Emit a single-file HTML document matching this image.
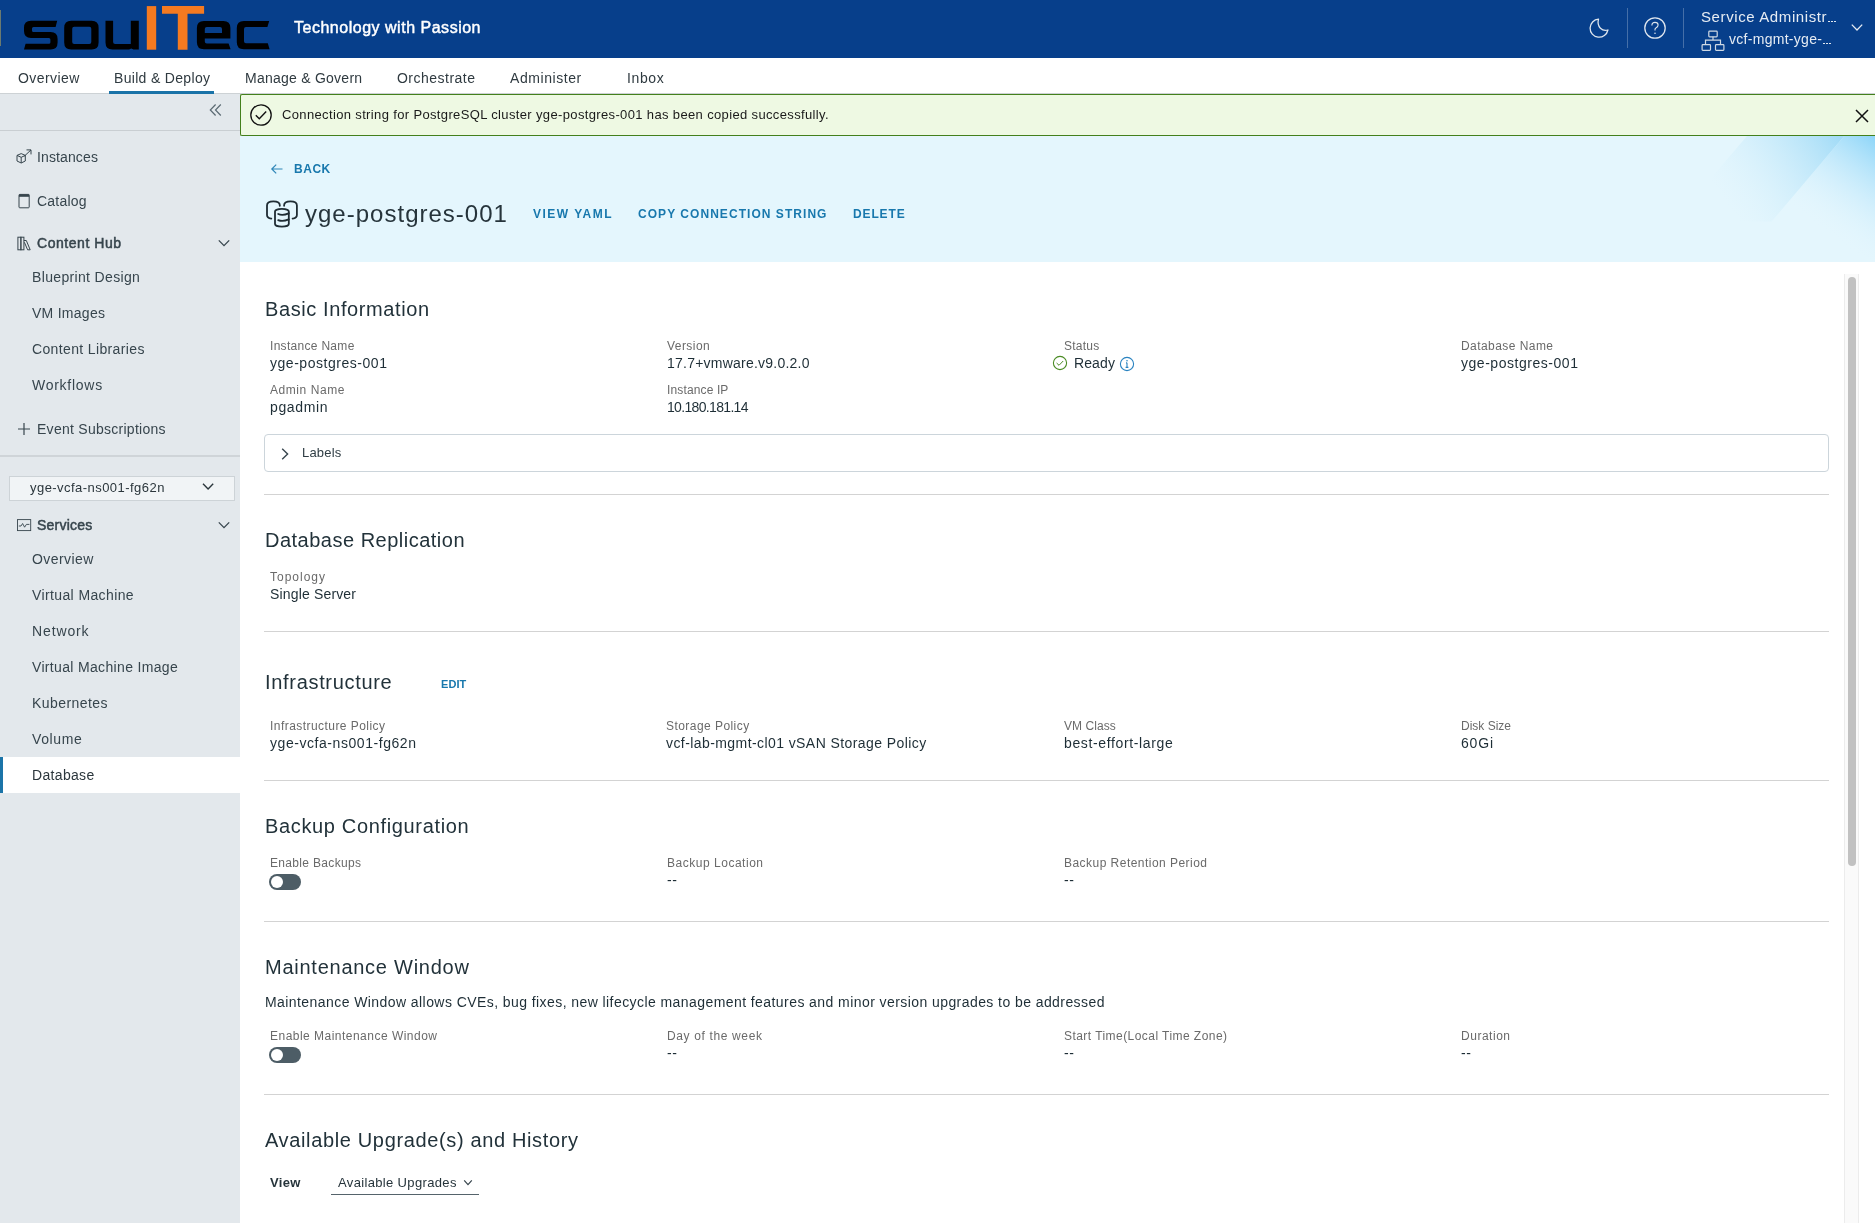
<!DOCTYPE html>
<html><head><meta charset="utf-8"><title>yge-postgres-001</title>
<style>
html,body{margin:0;padding:0;width:1875px;height:1223px;overflow:hidden;background:#fff;font-family:"Liberation Sans",sans-serif;}
.t{position:absolute;white-space:nowrap;line-height:1;will-change:transform;font-family:"Liberation Sans",sans-serif;}
</style></head><body>
<div style="position:absolute;left:0;top:0;width:1875px;height:58px;background:#073f8b"></div>
<div style="position:absolute;left:0;top:10px;width:1px;height:36px;background:#6b7a70"></div>
<svg style="position:absolute;left:0;top:0" width="280" height="58" viewBox="0 0 280 58">
<g fill="#000">
<path d="M31 20.8 H57.2 L55.6 27 H33.5 Q32 27 32 28.5 V30.4 Q32 31.9 33.5 31.9 H50.6 Q57.6 31.9 57.6 38.9 V42.6 Q57.6 49.6 50.6 49.6 H24 L25.6 43.7 H48.9 Q50.4 43.7 50.4 42.2 V39.6 Q50.4 38.1 48.9 38.1 H31 Q24 38.1 24 31.1 V27.8 Q24 20.8 31 20.8 Z"/>
<path fill-rule="evenodd" d="M71.2 20.8 H91.6 Q98.6 20.8 98.6 27.8 V42.6 Q98.6 49.6 91.6 49.6 H71.2 Q64.2 49.6 64.2 42.6 V27.8 Q64.2 20.8 71.2 20.8 Z M74.2 26.7 Q72.2 26.7 72.2 28.7 V42 Q72.2 44 74.2 44 H89.3 Q91.3 44 91.3 42 V28.7 Q91.3 26.7 89.3 26.7 Z"/>
<path d="M105.5 20.8 H113.1 V42 Q113.1 44 115.1 44 H130.8 V20.8 H138.8 V49.6 H133.5 L131.2 48.4 Q129.5 49.6 126 49.6 H112.5 Q105.5 49.6 105.5 42.6 Z"/>
<path fill-rule="evenodd" d="M203.9 20.9 H223.4 Q230.4 20.9 230.4 27.9 V38.5 H204.8 V41.6 Q204.8 43.6 206.8 43.6 H228.6 L230.6 49.3 H203.9 Q196.9 49.3 196.9 42.3 V27.9 Q196.9 20.9 203.9 20.9 Z M206.8 27 Q204.8 27 204.8 29 V33.1 H222 V29 Q222 27 220 27 Z"/>
<path d="M243.8 20.9 H269.2 L267.4 27 H246 Q244 27 244 29 V41.2 Q244 43.2 246 43.2 H267.8 L269.6 49.3 H243.8 Q236.8 49.3 236.8 42.3 V27.9 Q236.8 20.9 243.8 20.9 Z"/>
</g>
<g fill="#f47a20">
<rect x="146.8" y="6.1" width="9.4" height="43.6"/>
<path d="M162 6.1 H204.1 V13.7 H187.5 V49.7 H177.8 V13.7 H162 Z"/>
</g></svg>
<div class="t" style="left:294.10px;top:20px;font-size:16px;color:#ffffff;font-weight:400;letter-spacing:0.514px;-webkit-text-stroke:0.45px #ffffff;">Technology with Passion</div>
<div style="position:absolute;left:1627px;top:8px;width:1px;height:40px;background:rgba(255,255,255,0.25)"></div>
<div style="position:absolute;left:1683px;top:8px;width:1px;height:40px;background:rgba(255,255,255,0.25)"></div>
<svg style="position:absolute;left:1586px;top:16px" width="26" height="24" viewBox="0 0 26 24"><path d="M12.5 3.2 A9 9 0 1 0 21.9 14 C16.5 15.8 10.5 11 12.5 3.2 Z" fill="none" stroke="#dfe6ee" stroke-width="1.3" stroke-linejoin="round"/></svg>
<svg style="position:absolute;left:1643px;top:16px" width="24" height="24" viewBox="0 0 24 24"><circle cx="12" cy="12" r="10.2" fill="none" stroke="#dfe6ee" stroke-width="1.3"/><path d="M8.9 9.4 Q8.9 6.4 12 6.4 Q15.1 6.4 15.1 9.1 Q15.1 11 12.9 12 Q12 12.4 12 13.6 V14.6" fill="none" stroke="#dfe6ee" stroke-width="1.1"/><circle cx="12" cy="17.3" r="0.8" fill="#dfe6ee"/></svg>
<div class="t" style="left:1701.20px;top:9px;font-size:15px;color:#e6ecf3;font-weight:400;letter-spacing:0.608px;">Service Administr</div>
<div style="position:absolute;left:1828.0px;top:20.7px;width:1.5px;height:1.5px;background:#dfe7f0"></div>
<div style="position:absolute;left:1831.0px;top:20.7px;width:1.5px;height:1.5px;background:#dfe7f0"></div>
<div style="position:absolute;left:1834.0px;top:20.7px;width:1.5px;height:1.5px;background:#dfe7f0"></div>
<svg style="position:absolute;left:1701px;top:30px" width="24" height="22" viewBox="0 0 24 22"><g fill="none" stroke="#cfd9e4" stroke-width="1.2"><rect x="7.8" y="1.2" width="8.4" height="5.6" rx="0.8"/><path d="M12 6.8 V10.2 M4.5 14.6 V10.2 H19.5 V14.6"/><rect x="1.1" y="14.6" width="8.4" height="5.8" rx="0.8"/><rect x="14.5" y="14.6" width="8.4" height="5.8" rx="0.8"/></g></svg>
<div class="t" style="left:1729.00px;top:32px;font-size:14px;color:#e6ecf3;font-weight:400;letter-spacing:0.287px;">vcf-mgmt-yge-</div>
<div style="position:absolute;left:1823.0px;top:42.6px;width:1.5px;height:1.5px;background:#dfe7f0"></div>
<div style="position:absolute;left:1826.0px;top:42.6px;width:1.5px;height:1.5px;background:#dfe7f0"></div>
<div style="position:absolute;left:1829.0px;top:42.6px;width:1.5px;height:1.5px;background:#dfe7f0"></div>
<svg style="position:absolute;left:1850px;top:22px" width="14" height="11" viewBox="0 0 14 11"><path d="M1.8 2.6 L7 8 L12.2 2.6" fill="none" stroke="#e6ecf3" stroke-width="1.3"/></svg>
<div style="position:absolute;left:0;top:58px;width:1875px;height:35px;background:#fff"></div>
<div style="position:absolute;left:0;top:93px;width:1875px;height:1px;background:#cdd2d5"></div>
<div class="t" style="left:17.60px;top:71px;font-size:14px;color:#2f3a40;font-weight:400;letter-spacing:0.417px;">Overview</div>
<div class="t" style="left:113.60px;top:71px;font-size:14px;color:#2f3a40;font-weight:400;letter-spacing:0.320px;">Build &amp; Deploy</div>
<div class="t" style="left:244.90px;top:71px;font-size:14px;color:#2f3a40;font-weight:400;letter-spacing:0.249px;">Manage &amp; Govern</div>
<div class="t" style="left:396.80px;top:71px;font-size:14px;color:#2f3a40;font-weight:400;letter-spacing:0.485px;">Orchestrate</div>
<div class="t" style="left:509.60px;top:71px;font-size:14px;color:#2f3a40;font-weight:400;letter-spacing:0.572px;">Administer</div>
<div class="t" style="left:627.20px;top:71px;font-size:14px;color:#2f3a40;font-weight:400;letter-spacing:0.618px;">Inbox</div>
<div style="position:absolute;left:109px;top:91px;width:105px;height:3px;background:#1a73a8"></div>
<div style="position:absolute;left:0;top:94px;width:240px;height:1129px;background:#e3e8ec"></div>
<div style="position:absolute;left:0;top:130px;width:240px;height:1px;background:#c9ced2"></div>
<svg style="position:absolute;left:208px;top:103px" width="16" height="14" viewBox="0 0 16 14"><path d="M7.6 1.5 L2.3 7 L7.6 12.5 M12.8 1.5 L7.5 7 L12.8 12.5" fill="none" stroke="#5b6a73" stroke-width="1.2"/></svg>
<svg style="position:absolute;left:16px;top:149px" width="17" height="16" viewBox="0 0 17 16"><g fill="none" stroke="#37454d" stroke-width="1"><path d="M1 6.4 L5.2 4.6 L9.3 6.4 L9.3 12 L5.2 14 L1 12 Z M1 6.4 L5.2 8.3 L9.3 6.4 M5.2 8.3 V14"/><path d="M8.5 7 L15 0.9 M10.5 0.9 H15 V5.4"/></g></svg>
<div class="t" style="left:36.70px;top:150px;font-size:14px;color:#37454d;font-weight:400;letter-spacing:0.122px;">Instances</div>
<svg style="position:absolute;left:18px;top:193px" width="13" height="16" viewBox="0 0 13 16"><rect x="1" y="1.4" width="10.2" height="13.4" rx="0.8" fill="none" stroke="#37454d" stroke-width="1"/><rect x="1" y="1.4" width="10.2" height="2.4" fill="#37454d"/></svg>
<div class="t" style="left:36.70px;top:194px;font-size:14px;color:#37454d;font-weight:400;letter-spacing:0.228px;">Catalog</div>
<svg style="position:absolute;left:17px;top:236px" width="15" height="15" viewBox="0 0 15 15"><g fill="none" stroke="#37454d" stroke-width="1"><rect x="0.9" y="1.2" width="3" height="12.6"/><rect x="3.9" y="1.2" width="3" height="12.6"/><path d="M6.9 4.5 L9.3 4.5 L13.2 13.8 L10.6 13.8 L7.4 6.3"/></g></svg>
<div class="t" style="left:36.70px;top:236px;font-size:14px;color:#37454d;font-weight:400;letter-spacing:0.539px;-webkit-text-stroke:0.5px #37454d;">Content Hub</div>
<svg style="position:absolute;left:217px;top:237px" width="14" height="12" viewBox="0 0 14 12"><path d="M1.8 3.4 L7 8.6 L12.2 3.4" fill="none" stroke="#37454d" stroke-width="1.3"/></svg>
<div class="t" style="left:32.40px;top:270px;font-size:14px;color:#37454d;font-weight:400;letter-spacing:0.343px;">Blueprint Design</div>
<div class="t" style="left:32.40px;top:306px;font-size:14px;color:#37454d;font-weight:400;letter-spacing:0.266px;">VM Images</div>
<div class="t" style="left:32.40px;top:342px;font-size:14px;color:#37454d;font-weight:400;letter-spacing:0.362px;">Content Libraries</div>
<div class="t" style="left:32.40px;top:378px;font-size:14px;color:#37454d;font-weight:400;letter-spacing:0.734px;">Workflows</div>
<svg style="position:absolute;left:17px;top:422px" width="14" height="14" viewBox="0 0 14 14"><path d="M7 1 V13 M1 7 H13" fill="none" stroke="#37454d" stroke-width="1.2"/></svg>
<div class="t" style="left:36.90px;top:422px;font-size:14px;color:#37454d;font-weight:400;letter-spacing:0.269px;">Event Subscriptions</div>
<div style="position:absolute;left:0;top:455px;width:240px;height:2px;background:#cfd4d8"></div>
<div style="position:absolute;left:8.5px;top:475.5px;width:224px;height:23px;background:#f1f4f6;border:1px solid #cdd3d7"></div>
<div class="t" style="left:29.70px;top:481px;font-size:13px;color:#2b363c;font-weight:400;letter-spacing:0.454px;">yge-vcfa-ns001-fg62n</div>
<svg style="position:absolute;left:201px;top:480px" width="14" height="12" viewBox="0 0 14 12"><path d="M2 3.8 L7.1 9 L12.2 3.8" fill="none" stroke="#2b363c" stroke-width="1.4"/></svg>
<svg style="position:absolute;left:16px;top:518px" width="16" height="14" viewBox="0 0 16 14"><rect x="1.5" y="1.6" width="13.2" height="11" fill="none" stroke="#37454d" stroke-width="0.9"/><path d="M2.8 8 L5 8 L6.6 5.5 L8.6 9.2 L10.4 6.4 L13.4 6.4" fill="none" stroke="#37454d" stroke-width="0.9"/></svg>
<div class="t" style="left:36.50px;top:518px;font-size:14px;color:#37454d;font-weight:400;letter-spacing:0.216px;-webkit-text-stroke:0.5px #37454d;">Services</div>
<svg style="position:absolute;left:217px;top:519px" width="14" height="12" viewBox="0 0 14 12"><path d="M1.8 3.4 L7 8.6 L12.2 3.4" fill="none" stroke="#37454d" stroke-width="1.3"/></svg>
<div style="position:absolute;left:0;top:757px;width:240px;height:36px;background:#fff"></div>
<div style="position:absolute;left:0;top:757px;width:3px;height:36px;background:#1b74a8"></div>
<div class="t" style="left:32.40px;top:552px;font-size:14px;color:#37454d;font-weight:400;letter-spacing:0.417px;">Overview</div>
<div class="t" style="left:32.40px;top:588px;font-size:14px;color:#37454d;font-weight:400;letter-spacing:0.382px;">Virtual Machine</div>
<div class="t" style="left:32.40px;top:624px;font-size:14px;color:#37454d;font-weight:400;letter-spacing:0.875px;">Network</div>
<div class="t" style="left:32.40px;top:660px;font-size:14px;color:#37454d;font-weight:400;letter-spacing:0.334px;">Virtual Machine Image</div>
<div class="t" style="left:32.40px;top:696px;font-size:14px;color:#37454d;font-weight:400;letter-spacing:0.443px;">Kubernetes</div>
<div class="t" style="left:32.40px;top:732px;font-size:14px;color:#37454d;font-weight:400;letter-spacing:0.602px;">Volume</div>
<div class="t" style="left:32.40px;top:768px;font-size:14px;color:#2b363c;font-weight:400;letter-spacing:0.326px;">Database</div>
<div style="position:absolute;left:240px;top:94px;width:1640px;height:40px;background:#eef9e3;border:1px solid #43801c;border-right:none;border-radius:2px 0 0 2px"></div>
<svg style="position:absolute;left:249px;top:103px" width="24" height="24" viewBox="0 0 24 24"><circle cx="12" cy="12" r="10.2" fill="none" stroke="#111" stroke-width="1.3"/><path d="M6.8 12.2 L10.3 15.8 L17.2 8.6" fill="none" stroke="#111" stroke-width="1.4"/></svg>
<div class="t" style="left:281.80px;top:108px;font-size:13px;color:#1a1a1a;font-weight:400;letter-spacing:0.356px;">Connection string for PostgreSQL cluster yge-postgres-001 has been copied successfully.</div>
<svg style="position:absolute;left:1854px;top:108px" width="16" height="16" viewBox="0 0 16 16"><path d="M2 2 L14 14 M14 2 L2 14" fill="none" stroke="#111" stroke-width="1.5"/></svg>
<div style="position:absolute;left:240px;top:136px;width:1635px;height:126px;background:#e4f6fd;overflow:hidden"><svg style="position:absolute;left:0;top:0" width="1635" height="126" viewBox="240 136 1635 126"><defs><linearGradient id="g1" x1="1840" y1="140" x2="1735" y2="215" gradientUnits="userSpaceOnUse"><stop offset="0" stop-color="#a3dcf7" stop-opacity="1"/><stop offset="1" stop-color="#d9f1fc" stop-opacity="0"/></linearGradient><linearGradient id="g2" x1="1875" y1="136" x2="1812" y2="222" gradientUnits="userSpaceOnUse"><stop offset="0" stop-color="#8dd5f8" stop-opacity="1"/><stop offset="1" stop-color="#e3f5fd" stop-opacity="0"/></linearGradient></defs><polygon points="1747,136 1844.3,136 1771.6,221.6 1674,221.6" fill="url(#g1)"/><polygon points="1844.3,136 1875,136 1875,262 1771.6,221.6" fill="url(#g2)"/></svg></div>
<svg style="position:absolute;left:269px;top:161px" width="16" height="16" viewBox="0 0 16 16"><path d="M13.5 8 H3 M7.2 3.6 L2.8 8 L7.2 12.4" fill="none" stroke="#2f86b8" stroke-width="1.2"/></svg>
<div class="t" style="left:293.70px;top:163px;font-size:12px;color:#1878ad;font-weight:700;letter-spacing:0.540px;">BACK</div>
<svg style="position:absolute;left:262px;top:196px" width="40" height="36" viewBox="0 0 40 36"><g fill="none" stroke="#1f2c33" stroke-width="1.8" stroke-linecap="round" stroke-linejoin="round"><path d="M9.3 22.7 C6.5 22.2 5 21 5 19 V9.5 C5 6.5 8 5.3 11.4 5.3 C15 5.3 17.8 6.5 17.8 9.2 V9.8"/><path d="M30.6 22.7 C33.4 22.2 34.9 21 34.9 19 V9.5 C34.9 6.5 31.9 5.3 28.5 5.3 C24.9 5.3 22.1 6.5 22.1 9.2 V9.8"/><path d="M13 15.6 A6.9 2.7 0 0 1 26.8 15.6 V28 A6.9 2.7 0 0 1 13 28 Z"/><path d="M16.2 18 Q20.5 20 26.8 17.3 M16.2 24.1 Q20.5 26.1 26.8 23.4"/></g></svg>
<div class="t" style="left:305.00px;top:202px;font-size:24px;color:#26343b;font-weight:400;letter-spacing:1.011px;">yge-postgres-001</div>
<div class="t" style="left:532.80px;top:208px;font-size:12px;color:#1878ad;font-weight:700;letter-spacing:1.480px;">VIEW YAML</div>
<div class="t" style="left:638.40px;top:208px;font-size:12px;color:#1878ad;font-weight:700;letter-spacing:1.046px;">COPY CONNECTION STRING</div>
<div class="t" style="left:853.40px;top:208px;font-size:12px;color:#1878ad;font-weight:700;letter-spacing:0.872px;">DELETE</div>
<div style="position:absolute;left:1844px;top:274px;width:13px;height:949px;background:#fafafa;border-left:1px solid #ececec;border-right:1px solid #ececec"></div>
<div style="position:absolute;left:1848px;top:277px;width:8px;height:589px;background:#c1c1c1;border-radius:4px"></div>
<div class="t" style="left:265.00px;top:299px;font-size:20px;color:#22323a;font-weight:400;letter-spacing:0.594px;">Basic Information</div>
<div class="t" style="left:269.60px;top:340px;font-size:12px;color:#6a6a6a;font-weight:400;letter-spacing:0.300px;">Instance Name</div>
<div class="t" style="left:269.60px;top:356px;font-size:14px;color:#1e2e36;font-weight:400;letter-spacing:0.534px;">yge-postgres-001</div>
<div class="t" style="left:666.70px;top:340px;font-size:12px;color:#6a6a6a;font-weight:400;letter-spacing:0.447px;">Version</div>
<div class="t" style="left:666.70px;top:356px;font-size:14px;color:#1e2e36;font-weight:400;letter-spacing:0.226px;">17.7+vmware.v9.0.2.0</div>
<div class="t" style="left:1063.90px;top:340px;font-size:12px;color:#6a6a6a;font-weight:400;letter-spacing:0.236px;">Status</div>
<svg style="position:absolute;left:1052px;top:355px" width="16" height="16" viewBox="0 0 16 16"><circle cx="8" cy="8" r="6.6" fill="none" stroke="#4a8b23" stroke-width="1.1"/><path d="M4.6 8 L7 10.3 L11.2 6" fill="none" stroke="#4a8b23" stroke-width="1"/></svg>
<div class="t" style="left:1074.00px;top:355.5px;font-size:14px;color:#1e2e36;font-weight:400;letter-spacing:0.110px;">Ready</div>
<svg style="position:absolute;left:1119px;top:356px" width="16" height="16" viewBox="0 0 16 16"><circle cx="8" cy="8" r="6.6" fill="none" stroke="#2a83c0" stroke-width="1.1"/><path d="M8 6.8 V11.2 M6.6 11.4 H9.4 M7 6.9 H8" fill="none" stroke="#2a83c0" stroke-width="1.1"/><circle cx="8" cy="4.8" r="0.8" fill="#2a83c0"/></svg>
<div class="t" style="left:1461.00px;top:340px;font-size:12px;color:#6a6a6a;font-weight:400;letter-spacing:0.442px;">Database Name</div>
<div class="t" style="left:1461.00px;top:356px;font-size:14px;color:#1e2e36;font-weight:400;letter-spacing:0.534px;">yge-postgres-001</div>
<div class="t" style="left:269.60px;top:384px;font-size:12px;color:#6a6a6a;font-weight:400;letter-spacing:0.560px;">Admin Name</div>
<div class="t" style="left:269.60px;top:400px;font-size:14px;color:#1e2e36;font-weight:400;letter-spacing:0.635px;">pgadmin</div>
<div class="t" style="left:666.70px;top:384px;font-size:12px;color:#6a6a6a;font-weight:400;letter-spacing:0.134px;">Instance IP</div>
<div class="t" style="left:666.70px;top:400px;font-size:14px;color:#1e2e36;font-weight:400;letter-spacing:-0.669px;">10.180.181.14</div>
<div style="position:absolute;left:264px;top:434px;width:1563px;height:36px;border:1px solid #ccd5db;border-radius:4px;background:#fff"></div>
<svg style="position:absolute;left:278px;top:446px" width="14" height="16" viewBox="0 0 14 16"><path d="M4.2 2.8 L9.6 8 L4.2 13.2" fill="none" stroke="#37454d" stroke-width="1.4"/></svg>
<div class="t" style="left:301.50px;top:446px;font-size:13px;color:#2f3d44;font-weight:400;letter-spacing:0.183px;">Labels</div>
<div style="position:absolute;left:264px;top:494px;width:1565px;height:1px;background:#d3d3d3"></div>
<div class="t" style="left:265.00px;top:530px;font-size:20px;color:#22323a;font-weight:400;letter-spacing:0.495px;">Database Replication</div>
<div class="t" style="left:269.60px;top:571px;font-size:12px;color:#6a6a6a;font-weight:400;letter-spacing:0.991px;">Topology</div>
<div class="t" style="left:269.60px;top:587px;font-size:14px;color:#1e2e36;font-weight:400;letter-spacing:0.161px;">Single Server</div>
<div style="position:absolute;left:264px;top:631px;width:1565px;height:1px;background:#d3d3d3"></div>
<div class="t" style="left:265.00px;top:672px;font-size:20px;color:#22323a;font-weight:400;letter-spacing:0.685px;">Infrastructure</div>
<div class="t" style="left:441.00px;top:679px;font-size:11px;color:#1878ad;font-weight:700;letter-spacing:0.073px;">EDIT</div>
<div class="t" style="left:269.60px;top:720px;font-size:12px;color:#6a6a6a;font-weight:400;letter-spacing:0.449px;">Infrastructure Policy</div>
<div class="t" style="left:269.60px;top:736px;font-size:14px;color:#1e2e36;font-weight:400;letter-spacing:0.555px;">yge-vcfa-ns001-fg62n</div>
<div class="t" style="left:666.20px;top:720px;font-size:12px;color:#6a6a6a;font-weight:400;letter-spacing:0.446px;">Storage Policy</div>
<div class="t" style="left:666.20px;top:736px;font-size:14px;color:#1e2e36;font-weight:400;letter-spacing:0.420px;">vcf-lab-mgmt-cl01 vSAN Storage Policy</div>
<div class="t" style="left:1064.00px;top:720px;font-size:12px;color:#6a6a6a;font-weight:400;letter-spacing:0.063px;">VM Class</div>
<div class="t" style="left:1064.00px;top:736px;font-size:14px;color:#1e2e36;font-weight:400;letter-spacing:0.640px;">best-effort-large</div>
<div class="t" style="left:1461.00px;top:720px;font-size:12px;color:#6a6a6a;font-weight:400;letter-spacing:-0.005px;">Disk Size</div>
<div class="t" style="left:1461.00px;top:736px;font-size:14px;color:#1e2e36;font-weight:400;letter-spacing:0.820px;">60Gi</div>
<div style="position:absolute;left:264px;top:780px;width:1565px;height:1px;background:#d3d3d3"></div>
<div class="t" style="left:265.00px;top:816px;font-size:20px;color:#22323a;font-weight:400;letter-spacing:0.653px;">Backup Configuration</div>
<div class="t" style="left:269.60px;top:857px;font-size:12px;color:#6a6a6a;font-weight:400;letter-spacing:0.331px;">Enable Backups</div>
<div style="position:absolute;left:269px;top:874px;width:32px;height:16px;border-radius:8px;background:#4d5d66"></div>
<div style="position:absolute;left:270.6px;top:875.6px;width:12.8px;height:12.8px;border-radius:50%;background:#fff"></div>
<div class="t" style="left:666.70px;top:857px;font-size:12px;color:#6a6a6a;font-weight:400;letter-spacing:0.519px;">Backup Location</div>
<div class="t" style="left:666.70px;top:873px;font-size:14px;color:#1e2e36;font-weight:400;letter-spacing:0.690px;">--</div>
<div class="t" style="left:1063.90px;top:857px;font-size:12px;color:#6a6a6a;font-weight:400;letter-spacing:0.465px;">Backup Retention Period</div>
<div class="t" style="left:1063.90px;top:873px;font-size:14px;color:#1e2e36;font-weight:400;letter-spacing:0.690px;">--</div>
<div style="position:absolute;left:264px;top:921px;width:1565px;height:1px;background:#d3d3d3"></div>
<div class="t" style="left:265.00px;top:957px;font-size:20px;color:#22323a;font-weight:400;letter-spacing:0.747px;">Maintenance Window</div>
<div class="t" style="left:264.50px;top:995px;font-size:14px;color:#1e2e36;font-weight:400;letter-spacing:0.427px;">Maintenance Window allows CVEs, bug fixes, new lifecycle management features and minor version upgrades to be addressed</div>
<div class="t" style="left:269.60px;top:1030px;font-size:12px;color:#6a6a6a;font-weight:400;letter-spacing:0.481px;">Enable Maintenance Window</div>
<div style="position:absolute;left:269px;top:1047px;width:32px;height:16px;border-radius:8px;background:#4d5d66"></div>
<div style="position:absolute;left:270.6px;top:1048.6px;width:12.8px;height:12.8px;border-radius:50%;background:#fff"></div>
<div class="t" style="left:666.70px;top:1030px;font-size:12px;color:#6a6a6a;font-weight:400;letter-spacing:0.636px;">Day of the week</div>
<div class="t" style="left:666.70px;top:1046px;font-size:14px;color:#1e2e36;font-weight:400;letter-spacing:0.690px;">--</div>
<div class="t" style="left:1063.90px;top:1030px;font-size:12px;color:#6a6a6a;font-weight:400;letter-spacing:0.447px;">Start Time(Local Time Zone)</div>
<div class="t" style="left:1063.90px;top:1046px;font-size:14px;color:#1e2e36;font-weight:400;letter-spacing:0.690px;">--</div>
<div class="t" style="left:1461.00px;top:1030px;font-size:12px;color:#6a6a6a;font-weight:400;letter-spacing:0.520px;">Duration</div>
<div class="t" style="left:1461.00px;top:1046px;font-size:14px;color:#1e2e36;font-weight:400;letter-spacing:0.690px;">--</div>
<div style="position:absolute;left:264px;top:1094px;width:1565px;height:1px;background:#d3d3d3"></div>
<div class="t" style="left:264.60px;top:1130px;font-size:20px;color:#22323a;font-weight:400;letter-spacing:0.642px;">Available Upgrade(s) and History</div>
<div class="t" style="left:270.40px;top:1176px;font-size:13px;color:#26343b;font-weight:700;letter-spacing:0.318px;">View</div>
<div class="t" style="left:337.60px;top:1176px;font-size:13px;color:#26343b;font-weight:400;letter-spacing:0.346px;">Available Upgrades</div>
<svg style="position:absolute;left:461px;top:1176px" width="14" height="12" viewBox="0 0 14 12"><path d="M3.2 4.4 L7 8.6 L10.8 4.4" fill="none" stroke="#37454d" stroke-width="1.2"/></svg>
<div style="position:absolute;left:331px;top:1194px;width:148px;height:1px;background:#55636b"></div>
</body></html>
